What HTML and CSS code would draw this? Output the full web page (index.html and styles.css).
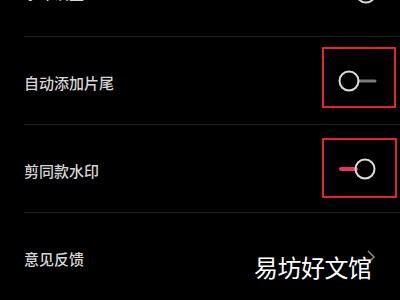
FILE: index.html
```html
<!DOCTYPE html>
<html lang="zh">
<head>
<meta charset="utf-8">
<link rel="stylesheet" href="styles.css">
</head>
<body>
<div class="screen">
  <div class="list">
    <div class="row row-top">
      <span class="label">水印设置</span>
      <svg class="toggle" width="40" height="22" viewBox="0 0 40 22"><circle cx="28" cy="11" r="9.5" fill="none" stroke="#d9d9d9" stroke-width="2"/></svg>
    </div>
    <div class="row">
      <span class="label">自动添加片尾</span>
      <svg class="toggle" width="40" height="22" viewBox="0 0 40 22"><line x1="21" y1="11" x2="37" y2="11" stroke="#7a7a7a" stroke-width="3" stroke-linecap="round"/><circle cx="11" cy="11" r="9.5" fill="none" stroke="#dcdcdc" stroke-width="2"/></svg>
    </div>
    <div class="row">
      <span class="label">剪同款水印</span>
      <svg class="toggle" width="40" height="22" viewBox="0 0 40 22"><line x1="3" y1="11" x2="18" y2="11" stroke="#e8335c" stroke-width="4" stroke-linecap="round"/><circle cx="27" cy="11" r="9.5" fill="none" stroke="#dcdcdc" stroke-width="2"/></svg>
    </div>
    <div class="row">
      <span class="label">意见反馈</span>
      <svg class="chevron" width="10" height="14" viewBox="0 0 10 14"><path d="M2 1 L8 7 L2 13" fill="none" stroke="#8a8a8a" stroke-width="1.5"/></svg>
    </div>
  </div>
  <div class="mark mark-1"></div>
  <div class="mark mark-2"></div>
  <div class="watermark">易坊好文馆</div>
</div>
</body>
</html>
```
FILE: styles.css
```css
html, body {
  margin: 0;
  padding: 0;
  background: #000;
}
.screen {
  position: relative;
  width: 400px;
  height: 300px;
  overflow: hidden;
  background: #000;
  font-family: "Noto Sans CJK SC", "Noto Sans", sans-serif;
}
.list {
  display: flex;
  flex-direction: column;
  margin-top: -51px;
  margin-left: 24px;
}
.row {
  display: flex;
  align-items: center;
  justify-content: space-between;
  height: 88px;
  padding-right: 22px;
  border-bottom: 1px solid #1e1e1e;
  box-sizing: border-box;
}
.row .label {
  font-size: 15px;
  font-weight: 500;
  color: #d6d6d6;
  padding-top: 3px;
}
.row-top .label {
  padding-top: 0;
  margin-top: -1px;
}
.toggle {
  display: block;
}
.chevron {
  display: block;
  margin-right: 2px;
  margin-top: 0;
}
.mark {
  position: absolute;
  border: 2px solid #e3242b;
  box-sizing: border-box;
}
.mark-1 {
  left: 322px;
  top: 47px;
  width: 74px;
  height: 61px;
}
.mark-2 {
  left: 322px;
  top: 138px;
  width: 75px;
  height: 60px;
}
.watermark {
  position: absolute;
  left: 254px;
  top: 250px;
  font-size: 24px;
  line-height: 34px;
  color: #fff;
  letter-spacing: -0.5px;
}
```
